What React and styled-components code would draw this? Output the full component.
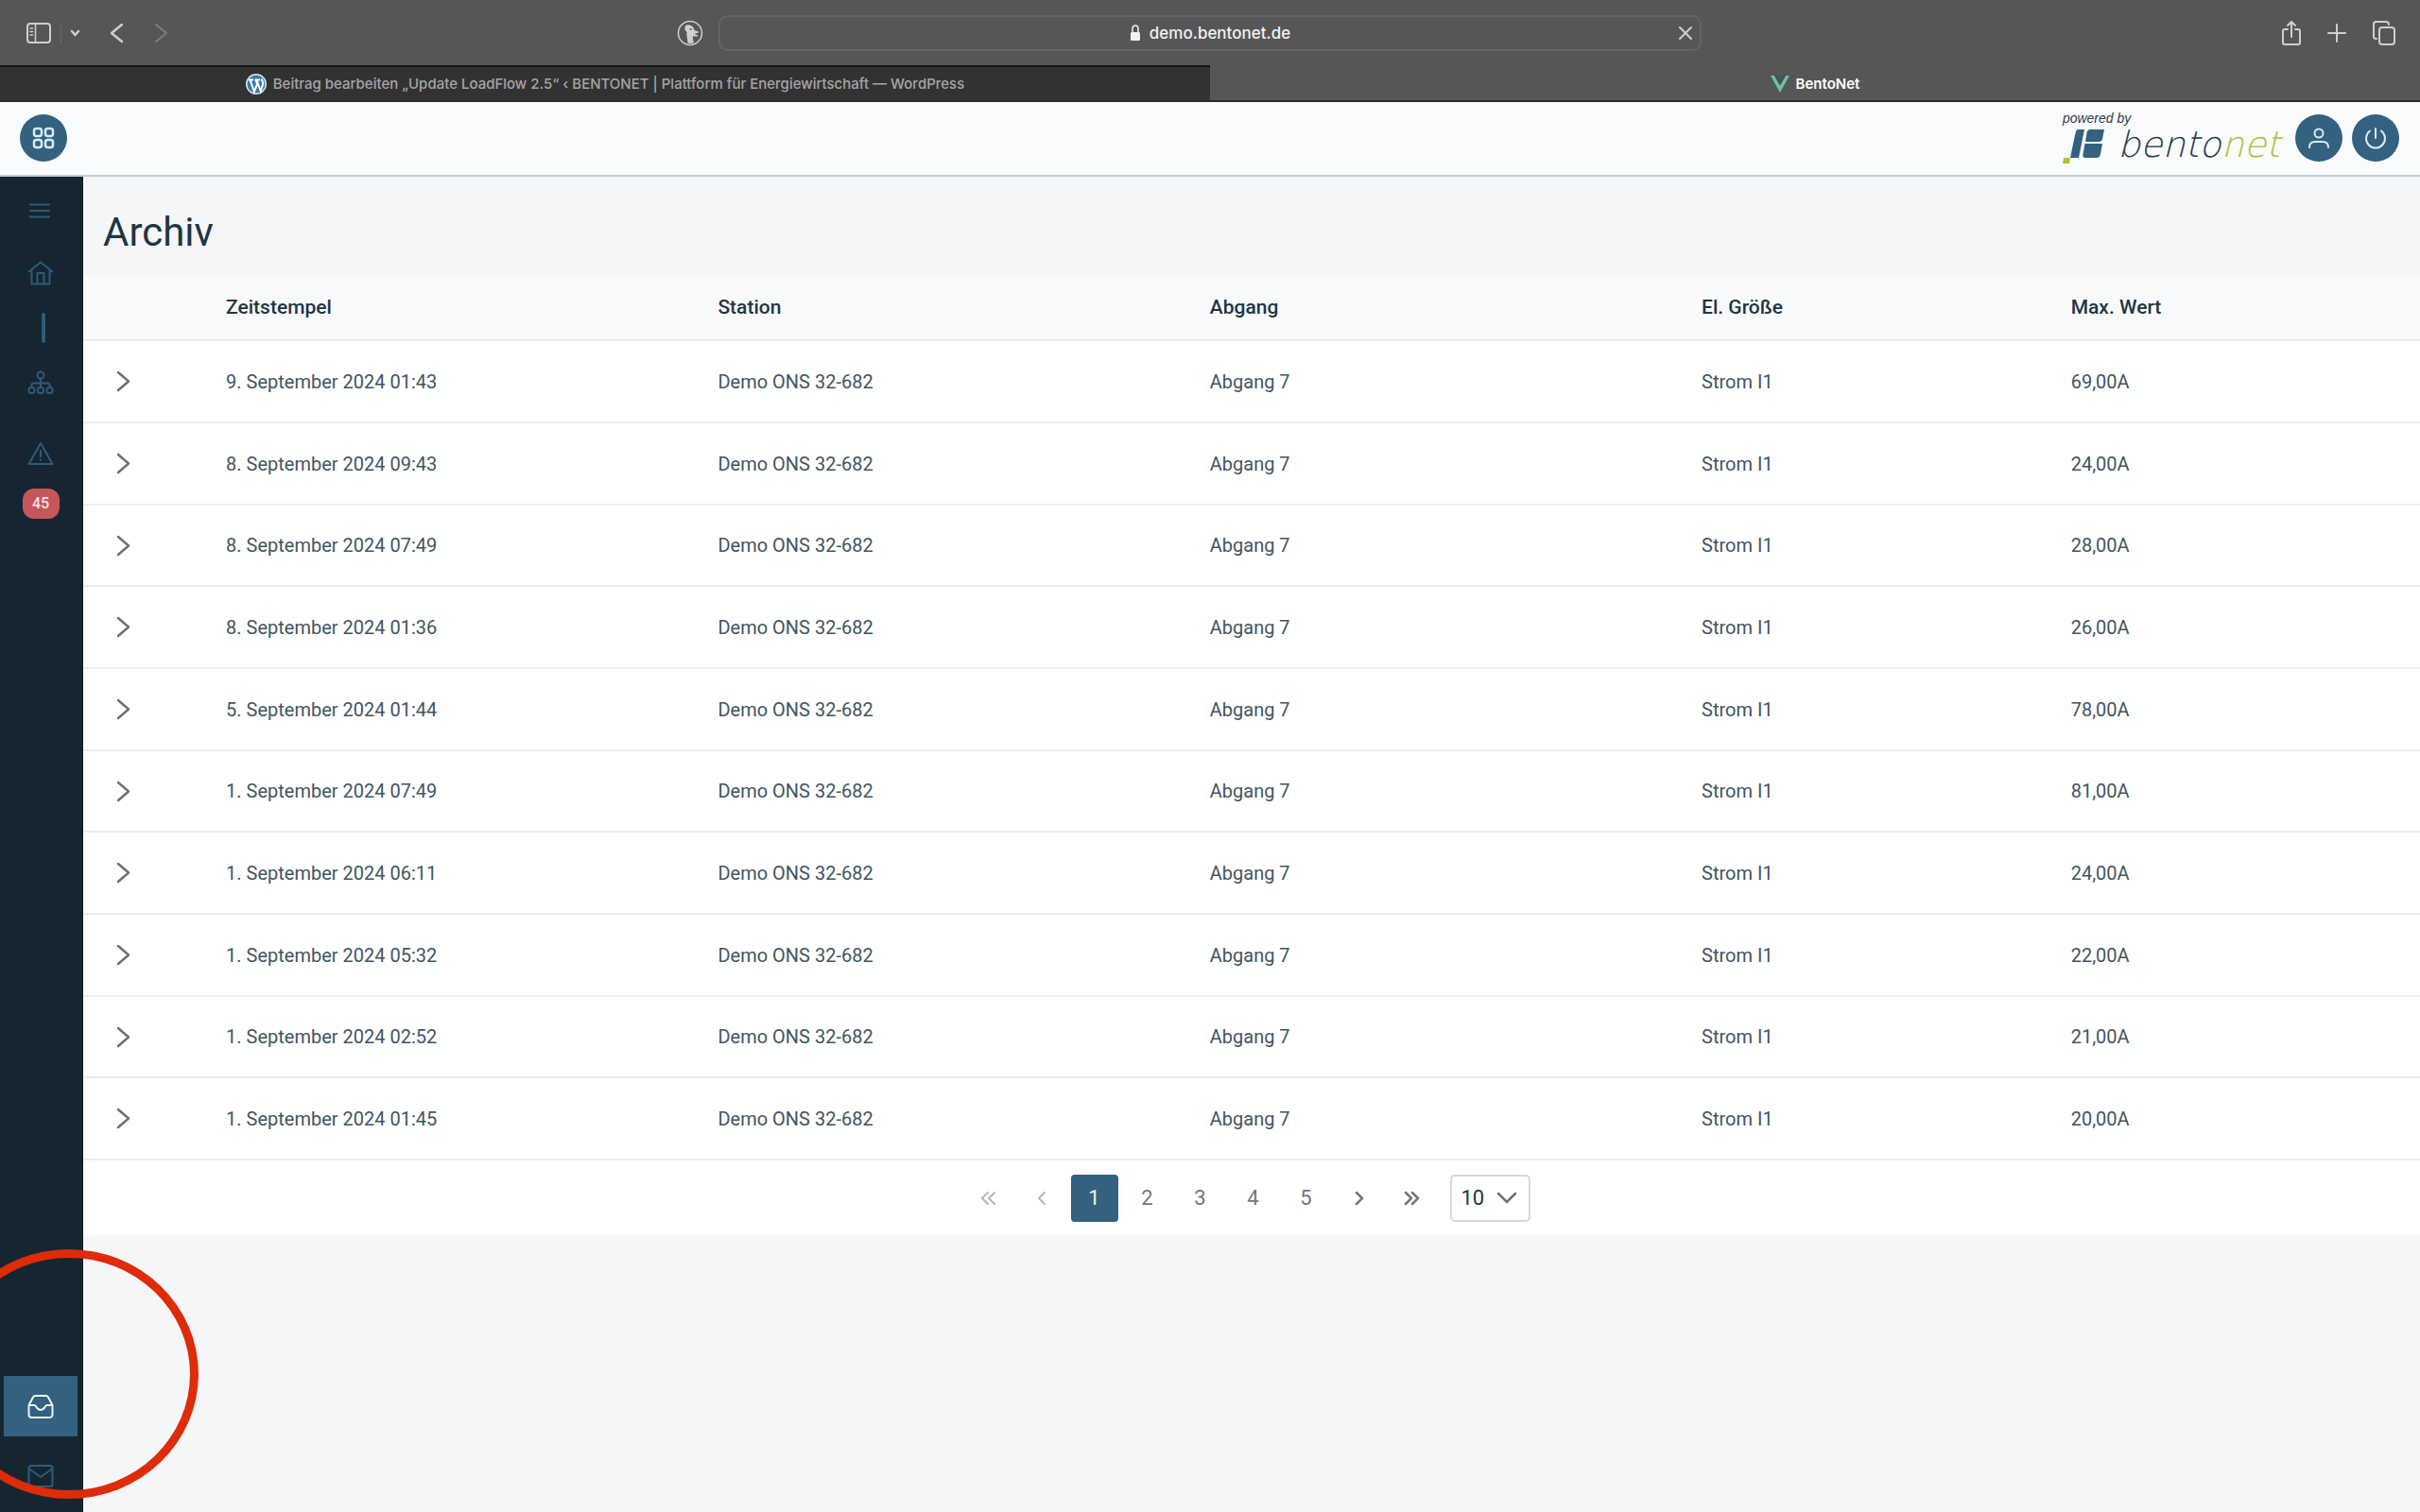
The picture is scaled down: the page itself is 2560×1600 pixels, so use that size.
import React, { useState } from "react";
import styled, { createGlobalStyle } from "styled-components";

const GlobalStyle = createGlobalStyle`
  * { box-sizing: border-box; }
  body {
    margin: 0;
    background-color: #f4f6f8;
    color: #1f3543;
    font-family: Roboto, "Liberation Sans", sans-serif;
    font-size: 22px;
  }
  button, input, select { font: inherit; color: inherit; }
`;

const Page = styled.div`
  display: flex;
  flex-direction: column;
  min-height: 100vh;
`;

/* ---------- browser chrome ---------- */

const Toolbar = styled.header`
  display: grid;
  grid-template-columns: 1fr 1040px 1fr;
  align-items: center;
  height: 69px;
  background-color: #565656;
  font-family: Inter, "Liberation Sans", sans-serif;
`;
const ToolGroup = styled.div`
  display: flex;
  align-items: center;
  justify-content: ${(p) => (p.$end ? "flex-end" : "flex-start")};
  gap: ${(p) => p.$gap}px;
  padding: 0 ${(p) => (p.$end ? 25 : 16)}px 0 27px;
`;
const HistoryGroup = styled.div`
  display: flex;
  gap: 32px;
  margin-left: 22px;
`;
const ToolButton = styled.button`
  display: flex;
  padding: 0;
  border: none;
  background: none;
  color: ${(p) => (p.$dim ? "#7d7d7d" : "#cfcfcf")};
  margin-left: ${(p) => (p.$push ? "auto" : "0")};
`;
const ToolDivider = styled.span`
  width: 1px;
  height: 22px;
  background-color: #6a6a6a;
`;
const AddressBar = styled.div`
  display: flex;
  align-items: center;
  justify-content: center;
  gap: 9px;
  height: 38px;
  padding: 0 7px;
  border: 2px solid #646464;
  border-radius: 10px;
  color: #f2f2f2;
`;
const AddressInput = styled.input`
  field-sizing: content;
  padding: 0;
  border: none;
  outline: none;
  background: none;
  font-size: 17px;
  font-weight: 500;
`;
const Side = styled.span`
  display: flex;
  flex: 1;
  justify-content: flex-end;
`;

const TabBar = styled.nav`
  display: grid;
  grid-template-columns: 1fr 1fr;
  height: 39px;
  border-bottom: 2px solid #2c2c2c;
  font-family: Inter, "Liberation Sans", sans-serif;
`;
const Tab = styled.a`
  display: flex;
  align-items: center;
  justify-content: center;
  gap: 7px;
  text-decoration: none;
  font-size: 15px;
  font-weight: ${(p) => (p.$active ? 600 : 500)};
  color: ${(p) => (p.$active ? "#ffffff" : "#a6a6a6")};
  background-color: ${(p) => (p.$active ? "#565656" : "#323232")};
  border-top: 2px solid ${(p) => (p.$active ? "#565656" : "#151515")};
`;

/* ---------- app header ---------- */

const Header = styled.header`
  display: flex;
  align-items: center;
  justify-content: space-between;
  height: 79px;
  padding: 0 22px 2px 21px;
  background-color: #fafbfd;
  border-bottom: 2px solid #c8cbce;
`;
const HeaderRight = styled.div`
  display: flex;
  align-items: center;
  gap: 10px;
`;
const RoundButton = styled.button`
  display: flex;
  align-items: center;
  justify-content: center;
  width: 50px;
  height: 50px;
  padding: 0;
  border: none;
  border-radius: 50%;
  background-color: #33617f;
  color: #d5ecf5;
`;
const Brand = styled.a`
  display: flex;
  flex-direction: column;
  margin-right: 6px;
  color: #2a3c4a;
  text-decoration: none;
`;
const PoweredBy = styled.span`
  font-family: "Liberation Sans", sans-serif;
  font-style: italic;
  font-size: 14px;
  line-height: 14px;
`;
const BrandRow = styled.span`
  display: flex;
  align-items: flex-end;
  gap: 13px;
`;
const BrandName = styled.span`
  font-family: "DejaVu Sans Light", "DejaVu Sans", sans-serif;
  font-weight: 200;
  font-style: italic;
  font-size: 38px;
  line-height: 42px;
  em { color: #b3bf3a; }
`;

/* ---------- layout ---------- */

const Body = styled.div`
  display: flex;
  flex: 1;
`;
const Sidebar = styled.nav`
  display: flex;
  flex-direction: column;
  align-items: center;
  gap: 10px;
  width: 88px;
  padding: 10px 1px 6px 0;
  background-color: #162630;
  border-right: 1px solid #0d1a22;
`;
const SideButton = styled.button`
  display: flex;
  align-items: center;
  justify-content: center;
  width: 78px;
  height: ${(p) => (p.$short ? 50 : 64)}px;
  padding: 0;
  border: none;
  margin-top: ${(p) => (p.$bottom ? "auto" : "0")};
  background-color: ${(p) => (p.$active ? "#33617f" : "transparent")};
  color: ${(p) => (p.$active ? "#e6f4f9" : "#315a78")};
`;
const SideMark = styled.span`
  width: 4px;
  height: 32px;
  margin-left: 6px;
  border-radius: 2px;
  background-color: #315a78;
`;
const AlertGroup = styled.div`
  display: flex;
  flex-direction: column;
  align-items: center;
  gap: 6px;
`;
const Badge = styled.span`
  width: 39px;
  border-radius: 12px;
  background-color: #c5575b;
  color: #f7e2e2;
  font-size: 16px;
  font-weight: 500;
  line-height: 32px;
  text-align: center;
`;

const Main = styled.main`
  flex: 1;
  min-width: 0;
`;
const Title = styled.h1`
  margin: 0;
  padding: 35px 21px 21px;
  font-size: 42px;
  font-weight: 400;
  line-height: 48px;
`;

const Table = styled.table`
  width: 100%;
  table-layout: fixed;
  border-collapse: separate;
  border-spacing: 0;
  background-color: #ffffff;
`;
const HeadCell = styled.th`
  width: ${(p) => p.$width || "auto"};
  height: 70px;
  padding: 0 25px;
  background-color: #f9fafc;
  border-bottom: 2px solid #e9ecef;
  font-size: 21px;
  font-weight: 500;
  text-align: left;
`;
const Row = styled.tr`
  height: 87px;
  &:nth-child(3n) { height: 86px; }
`;
const Cell = styled.td`
  padding: 0 25px;
  border-bottom: 2px solid #eceef0;
  font-size: 20px;
  color: #42555f;
`;
const Expander = styled.button`
  display: flex;
  padding: 0 10px;
  border: none;
  background: none;
  color: #6b7176;
`;

const Paginator = styled.div`
  display: flex;
  align-items: center;
  justify-content: center;
  height: 79px;
  background-color: #ffffff;
`;
const PageButton = styled.button`
  display: flex;
  align-items: center;
  justify-content: center;
  width: 50px;
  height: 50px;
  margin: 0 3px;
  padding: 0;
  border: none;
  border-radius: 4px;
  background-color: ${(p) => (p.$active ? "#33617f" : "transparent")};
  color: ${(p) => (p.$active ? "#e8f3f8" : "#72777c")};
  &:disabled { color: #b4b7ba; }
`;
const PageSize = styled.label`
  display: flex;
  align-items: center;
  position: relative;
  margin: 0 12px;
  svg {
    position: absolute;
    right: 14px;
    color: #6b7176;
    pointer-events: none;
  }
`;
const PageSelect = styled.select`
  appearance: none;
  width: 85px;
  height: 50px;
  padding: 0 0 0 10px;
  border: 2px solid #d5d8db;
  border-radius: 5px;
  background-color: #ffffff;
`;

/* red ring that points at the archive entry, it lies over the page */
const Highlight = styled.div`
  position: fixed;
  left: -64px;
  bottom: 14px;
  width: 274px;
  height: 264px;
  border: 9px solid #de2c0a;
  border-radius: 50%;
  pointer-events: none;
`;

/* ---------- icons ---------- */

const Icon = ({ w = 28, h = w, box = `0 0 ${w} ${h}`, sw = 2, children }) => (
  <svg width={w} height={h} viewBox={box} fill="none" stroke="currentColor"
    strokeWidth={sw} strokeLinecap="round" strokeLinejoin="round" aria-hidden="true">
    {children}
  </svg>
);

const PanelIcon = () => (
  <Icon w={28} h={24}>
    <rect x="2" y="2" width="24" height="20" rx="3" />
    <path d="M10.500 2v20M5 7h2.500M5 10.500h2.500M5 14h2.500" strokeWidth="1.500" />
  </Icon>
);
const DuckIcon = () => (
  <Icon w={28}>
    <circle cx="14" cy="14" r="12.500" strokeWidth="1.500" />
    <path d="M8.500 8c.5-2 2-3 4-2.500 3.500 0 5.500 2.500 6 5.500l4.500 1.500c1 .6 0 1.200-1 1.300l-3.500 1 3.500 1.500c1 .8-.5 1.500-2 1.300l-3-.3c-.5 2 .3 5 1 7-2.500 1-5 .8-6.500.3C11.500 21 10 17 10.500 13 9.500 11.500 8 10.500 8.500 8z"
      fill="currentColor" stroke="none" />
    <circle cx="14.500" cy="10" r="1" fill="#565656" stroke="none" />
  </Icon>
);
const LockIcon = () => (
  <Icon w={12} h={20}>
    <path d="M3 9V5.500a3 3.500 0 0 1 6 0V9" strokeWidth="1.500" />
    <rect x="1" y="9" width="10" height="9" rx="1.500" fill="currentColor" stroke="none" />
  </Icon>
);
const WordPressIcon = () => (
  <svg width="22" height="22" viewBox="0 0 22 22" aria-hidden="true">
    <circle cx="11" cy="11" r="11" fill="#d9e8f1" />
    <circle cx="11" cy="11" r="9.500" fill="#3d7ba5" />
    <path d="M3 6.500h5M9.500 6.500h5.500M4.500 6.500L9 19l3-8-1.500-4.500M11.500 6.500l4.200 12 2.300-7c.8-3-1.300-4-1-6"
      fill="none" stroke="#fff" strokeWidth="2" />
  </svg>
);
const VueIcon = () => (
  <svg width="20" height="18" viewBox="0 0 20 18" aria-hidden="true">
    <path d="M0 0h4l6 10.500L16 0h4L10 18z" fill="#6cc494" />
    <path d="M4 0h3.500L10 4.300 12.500 0H16l-6 10.500z" fill="#3d5263" />
  </svg>
);
const ShareIcon = () => (
  <Icon w={22} h={30}>
    <path d="M7 11H4a2 2 0 0 0-2 2v12a2 2 0 0 0 2 2h14a2 2 0 0 0 2-2V13a2 2 0 0 0-2-2h-3M11 19V3M7 7l4-4 4 4" />
  </Icon>
);
const PlusIcon = () => <Icon w={20}><path d="M10 1v18M1 10h18" /></Icon>;
const CopyIcon = () => (
  <Icon w={26} h={28}>
    <rect x="8" y="8" width="16" height="18" rx="3" />
    <path d="M5 20H4.500a2.500 2.500 0 0 1-2.500-2.500V4.500A2.500 2.500 0 0 1 4.500 2H15a3 3 0 0 1 3 3" />
  </Icon>
);
const GridIcon = () => (
  <Icon w={24} sw={2.5}>
    <rect x="2" y="2" width="8" height="8" rx="2.500" />
    <rect x="14" y="2" width="8" height="8" rx="2.500" />
    <rect x="2" y="14" width="8" height="8" rx="2.500" />
    <rect x="14" y="14" width="8" height="8" rx="2.500" />
  </Icon>
);
const UserIcon = () => (
  <Icon w={24}>
    <circle cx="12" cy="7" r="4.500" />
    <path d="M2 22c0-4 2.500-6 6-6h8c3.500 0 6 2 6 6" />
  </Icon>
);
const PowerIcon = () => (
  <Icon w={24}><path d="M12 2v10M6 4.500a10 10 0 1 0 12 0" /></Icon>
);
const BrandMark = () => (
  <svg width="45" height="38" viewBox="0 0 45 38" aria-hidden="true">
    <path d="M16 1h7l-6 30H8l5-24c1-4 1.500-6 3-6z" fill="#33617f" />
    <path d="M29 1h15l-2 10c-.5 2-1.500 3-4 3H24l1.500-9c.5-3 1.500-4 3.500-4z" fill="#33617f" />
    <path d="M23.500 16H42l-2 11c-.6 3-2 4-4 4H24c-2 0-3-1-2.500-4z" fill="#33617f" />
    <path d="M1 31h7l-1 6H0z" fill="#b3bf3a" />
  </svg>
);
const MenuIcon = () => (
  <Icon w={28}><path d="M3 8.500h20M3 15h20M3 21.500h20" /></Icon>
);
const HomeIcon = () => (
  <Icon w={28}>
    <path d="M1.500 12.500L14 2.500l12.500 10M4.500 11v14.500h19V11M10.500 25.500V14h7v11.500" />
  </Icon>
);
const SitemapIcon = () => (
  <Icon w={28}>
    <circle cx="14" cy="6" r="3.500" />
    <rect x="1.500" y="19" width="6" height="6" rx="2.500" />
    <rect x="11" y="19" width="6" height="6" rx="2.500" />
    <rect x="20.500" y="19" width="6" height="6" rx="2.500" />
    <path d="M14 9.500V19M4.500 19v-2.500a2 2 0 0 1 2-2h15a2 2 0 0 1 2 2V19" />
  </Icon>
);
const WarningIcon = () => (
  <Icon w={28}><path d="M14 4L1.500 26h25zM14 12v6.500M14 21.700v.3" /></Icon>
);
const InboxIcon = () => (
  <Icon w={28}>
    <path d="M1.500 13h6c2 0 2 5 6.500 5s4.500-5 6.500-5h6M1.500 13v10a3 3 0 0 0 3 3h19a3 3 0 0 0 3-3V13L22 4.500A3 3 0 0 0 19.500 3h-11A3 3 0 0 0 6 4.500z" />
  </Icon>
);
const MailIcon = () => (
  <Icon w={28}>
    <rect x="1.500" y="3" width="25" height="22" rx="2.500" />
    <path d="M2 6.500L14 15l12-8.500" />
  </Icon>
);

/* one chevron, or two side by side */
const Chevron = ({ left, double, w = 12, h = 20, sw = 2 }) => {
  const full = double ? w + 7 : w;
  const one = (x) =>
    left ? `M${x + w - 2} 2L${x + 2} ${h / 2}L${x + w - 2} ${h - 2}`
      : `M${x + 2} 2L${x + w - 2} ${h / 2}L${x + 2} ${h - 2}`;
  return (
    <Icon w={full} h={h} sw={sw}>
      <path d={one(0)} />
      {double && <path d={one(7)} />}
    </Icon>
  );
};
const DownIcon = ({ w, h, sw }) => (
  <Icon w={w} h={h} sw={sw}><path d={`M2 2L${w / 2} ${h - 2}L${w - 2} 2`} /></Icon>
);

/* ---------- data ---------- */

const columns = [
  { title: "Zeitstempel", width: "21.05%" },
  { title: "Station", width: "21.05%" },
  { title: "Abgang", width: "21.05%" },
  { title: "El. Größe", width: "15.8%" },
  { title: "Max. Wert" },
];

const rows = [
  { time: "9. September 2024 01:43", value: "69,00A" },
  { time: "8. September 2024 09:43", value: "24,00A" },
  { time: "8. September 2024 07:49", value: "28,00A" },
  { time: "8. September 2024 01:36", value: "26,00A" },
  { time: "5. September 2024 01:44", value: "78,00A" },
  { time: "1. September 2024 07:49", value: "81,00A" },
  { time: "1. September 2024 06:11", value: "24,00A" },
  { time: "1. September 2024 05:32", value: "22,00A" },
  { time: "1. September 2024 02:52", value: "21,00A" },
  { time: "1. September 2024 01:45", value: "20,00A" },
];

function Browser() {
  return (
    <>
      <Toolbar>
        <ToolGroup $gap={9}>
          <ToolButton aria-label="Seitenleiste"><PanelIcon /></ToolButton>
          <ToolDivider />
          <ToolButton aria-label="Tabgruppen"><DownIcon w={11} h={8} sw={2.5} /></ToolButton>
          <HistoryGroup>
            <ToolButton aria-label="Zurück"><Chevron left w={15} h={22} sw={2.5} /></ToolButton>
            <ToolButton $dim aria-label="Vorwärts"><Chevron w={15} h={22} /></ToolButton>
          </HistoryGroup>
          <ToolButton $push aria-label="DuckDuckGo"><DuckIcon /></ToolButton>
        </ToolGroup>
        <AddressBar>
          <Side />
          <LockIcon />
          <AddressInput aria-label="Adresse" defaultValue="demo.bentonet.de" />
          <Side>
            <ToolButton aria-label="Laden stoppen">
              <Icon w={16}><path d="M2 2l12 12M14 2L2 14" /></Icon>
            </ToolButton>
          </Side>
        </AddressBar>
        <ToolGroup $end $gap={27}>
          <ToolButton aria-label="Teilen"><ShareIcon /></ToolButton>
          <ToolButton aria-label="Neuer Tab"><PlusIcon /></ToolButton>
          <ToolButton aria-label="Tabübersicht"><CopyIcon /></ToolButton>
        </ToolGroup>
      </Toolbar>
      <TabBar>
        <Tab href="#wordpress">
          <WordPressIcon />
          Beitrag bearbeiten „Update LoadFlow 2.5“ ‹ BENTONET | Plattform für Energiewirtschaft — WordPress
        </Tab>
        <Tab href="#bentonet" $active><VueIcon />BentoNet</Tab>
      </TabBar>
    </>
  );
}

function App() {
  const [page, setPage] = useState(1);

  return (
    <Page>
      <GlobalStyle />
      <Browser />
      <Header>
        <RoundButton aria-label="Module"><GridIcon /></RoundButton>
        <HeaderRight>
          <Brand href="#home">
            <PoweredBy>powered by</PoweredBy>
            <BrandRow>
              <BrandMark />
              <BrandName>bento<em>net</em></BrandName>
            </BrandRow>
          </Brand>
          <RoundButton aria-label="Profil"><UserIcon /></RoundButton>
          <RoundButton aria-label="Abmelden"><PowerIcon /></RoundButton>
        </HeaderRight>
      </Header>
      <Body>
        <Sidebar>
          <SideButton $short aria-label="Menü"><MenuIcon /></SideButton>
          <SideButton aria-label="Start"><HomeIcon /></SideButton>
          <SideMark />
          <SideButton aria-label="Netz"><SitemapIcon /></SideButton>
          <AlertGroup>
            <SideButton aria-label="Alarme"><WarningIcon /></SideButton>
            <Badge>45</Badge>
          </AlertGroup>
          <SideButton $bottom $active aria-label="Archiv"><InboxIcon /></SideButton>
          <SideButton aria-label="Nachrichten"><MailIcon /></SideButton>
        </Sidebar>
        <Main>
          <Title>Archiv</Title>
          <Table>
            <thead>
              <tr>
                <HeadCell $width="5.1%" />
                {columns.map((col) => (
                  <HeadCell key={col.title} $width={col.width}>{col.title}</HeadCell>
                ))}
              </tr>
            </thead>
            <tbody>
              {rows.map((row) => (
                <Row key={row.time}>
                  <Cell>
                    <Expander aria-label="Details anzeigen"><Chevron w={15} h={23} sw={2.5} /></Expander>
                  </Cell>
                  <Cell>{row.time}</Cell>
                  <Cell>Demo ONS 32-682</Cell>
                  <Cell>Abgang 7</Cell>
                  <Cell>Strom I1</Cell>
                  <Cell>{row.value}</Cell>
                </Row>
              ))}
            </tbody>
          </Table>
          <Paginator>
            <PageButton disabled={page === 1} onClick={() => setPage(1)} aria-label="Erste Seite">
              <Chevron left double w={10} h={16} />
            </PageButton>
            <PageButton disabled={page === 1} onClick={() => setPage(page - 1)} aria-label="Vorherige Seite">
              <Chevron left w={10} h={16} />
            </PageButton>
            {[1, 2, 3, 4, 5].map((n) => (
              <PageButton key={n} $active={n === page} onClick={() => setPage(n)}>{n}</PageButton>
            ))}
            <PageButton disabled={page === 5} onClick={() => setPage(page + 1)} aria-label="Nächste Seite">
              <Chevron w={10} h={16} sw={2.5} />
            </PageButton>
            <PageButton disabled={page === 5} onClick={() => setPage(5)} aria-label="Letzte Seite">
              <Chevron double w={10} h={16} sw={2.5} />
            </PageButton>
            <PageSize>
              <PageSelect aria-label="Zeilen pro Seite" defaultValue="10">
                <option>10</option>
                <option>20</option>
                <option>50</option>
              </PageSelect>
              <DownIcon w={22} h={13} sw={2.5} />
            </PageSize>
          </Paginator>
        </Main>
      </Body>
      <Highlight />
    </Page>
  );
}

export default App;
